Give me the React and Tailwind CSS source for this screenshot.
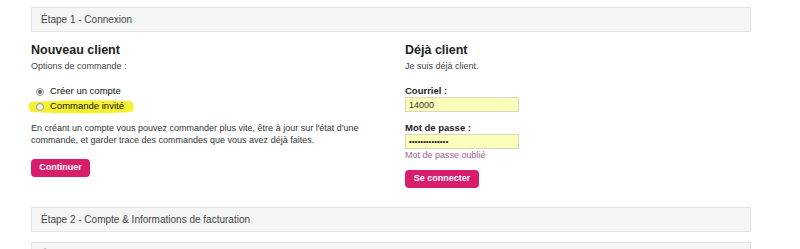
import React from "react";

const font = { fontFamily: '"Liberation Sans", Arial, sans-serif' };

function StepHeader({ children }) {
  return (
    <div className="h-[25px] flex items-center px-[9px] bg-[#f5f5f5] border border-[#e3e3e3] text-[10px] text-[#444]">
      {children}
    </div>
  );
}

function Radio({ checked }) {
  return (
    <span className="inline-flex w-[8px] h-[8px] rounded-full border border-[#9a9a9a] bg-gradient-to-b from-[#e8e8e8] to-white items-center justify-center">
      {checked && <span className="w-[4px] h-[4px] rounded-full bg-[#666]" />}
    </span>
  );
}

export default function App() {
  return (
    <div className="w-[800px] h-[249px] bg-white overflow-hidden text-[#333]" style={font}>
      <div className="w-[720px] ml-[31px] pt-[7px]">
        <StepHeader>Étape 1 - Connexion</StepHeader>

        <div className="flex pt-[10px]">
          {/* Nouveau client */}
          <div className="w-[374px]">
            <h2 className="text-[12.5px] font-bold text-[#222] leading-[16px]">Nouveau client</h2>
            <p className="text-[9px] text-[#444] leading-[12px] mt-[2px]">Options de commande :</p>
            <div className="mt-[14px] flex flex-col gap-[4px] text-[9.5px] text-[#111]">
              <label className="flex items-center gap-[6px] pl-[5px] h-[11px]">
                <Radio checked />
                <span>Créer un compte</span>
              </label>
              <label className="relative flex items-center gap-[6px] pl-[5px] h-[11px]">
                <svg
                  className="absolute left-[-4px] top-[-3px] w-[110px] h-[17px]"
                  viewBox="0 0 110 17"
                >
                  <path
                    d="M3 4 Q55 1 104 3 Q109 8 105 14 Q55 17 4 14 Q0 9 3 4 Z"
                    fill="#f4f01c"
                    fillOpacity="0.9"
                  />
                </svg>
                <span className="relative inline-flex"><Radio /></span>
                <span className="relative">Commande invité</span>
              </label>
            </div>
            <p className="mt-[10px] text-[9px] leading-[12px] text-[#333]">
              En créant un compte vous pouvez commander plus vite, être à jour sur l'état d'une
              <br />
              commande, et garder trace des commandes que vous avez déjà faites.
            </p>
            <button className="mt-[13px] h-[18px] w-[59px] rounded-[4px] bg-[#d81e6b] text-white text-[9px] font-bold">
              Continuer
            </button>
          </div>

          {/* Déjà client */}
          <div className="flex-1">
            <h2 className="text-[12.5px] font-bold text-[#222] leading-[16px]">Déjà client</h2>
            <p className="text-[9px] text-[#444] leading-[12px] mt-[2px]">Je suis déjà client.</p>
            <div className="mt-[13px] text-[9.5px] font-bold text-[#222] leading-[12px]">Courriel :</div>
            <input
              className="block w-[114px] h-[15px] px-[3px] bg-[#fbfdbb] border border-[#d8d8c0] text-[9px] text-[#333] outline-none"
              defaultValue="14000"
              style={font}
            />
            <div className="mt-[10px] text-[9.5px] font-bold text-[#222] leading-[12px]">Mot de passe :</div>
            <input
              className="block w-[114px] h-[15px] px-[3px] bg-[#fbfdbb] border border-[#d8d8c0] text-[8px] text-[#222] outline-none"
              defaultValue="••••••••••••••"
              style={font}
            />
            <a className="block text-[9px] leading-[12px] text-[#a0668a]">Mot de passe oublié</a>
            <button className="mt-[9px] h-[18px] w-[74px] rounded-[4px] bg-[#d81e6b] text-white text-[9px] font-bold">
              Se connecter
            </button>
          </div>
        </div>

        <div className="mt-[19px]">
          <StepHeader>Étape 2 - Compte &amp; Informations de facturation</StepHeader>
        </div>
        <div className="mt-[10px]">
          <StepHeader>Étape 3 - Informations de livraison</StepHeader>
        </div>
      </div>
    </div>
  );
}
